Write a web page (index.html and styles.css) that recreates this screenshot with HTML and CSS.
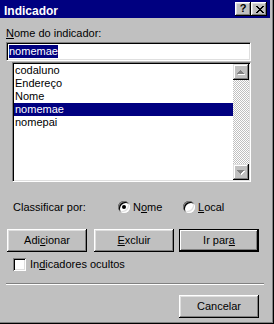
FILE: index.html
```html
<!DOCTYPE html>
<html lang="pt">
<head>
    <meta charset="UTF-8">
    <title>Indicador</title>
    <link rel="stylesheet" href="styles.css">
</head>
<body>
    <div class="dialog">
        <div class="titlebar">
            <span class="title">Indicador</span>
            <div class="caption-btns">
                <button class="cap-btn help">?</button>
                <button class="cap-btn close">
                    <svg width="8" height="7" viewBox="0 0 8 7" shape-rendering="crispEdges">
                        <path d="M0 0h2v1h1v1h2V1h1V0h2v1H7v1H6v1H5v1h1v1h1v1h1v1H6V6H5V5H3v1H2v1H0V6h1V5h1V4h1V3H2V2H1V1H0z" fill="#000"/>
                    </svg>
                </button>
            </div>
        </div>

        <div class="content">
            <div class="field-label"><u>N</u>ome do indicador:</div>
            <div class="textbox"><span class="selected-text">nomemae</span></div>

            <div class="listbox">
                <ul class="items">
                    <li>codaluno</li>
                    <li>Endereço</li>
                    <li>Nome</li>
                    <li class="active">nomemae</li>
                    <li>nomepai</li>
                </ul>
                <div class="vscroll">
                    <div class="scroll-btn">
                        <svg width="16" height="16" viewBox="0 0 16 16" shape-rendering="crispEdges">
                            <path d="M8 7h1v1h1v1h1v1h1v1H5V10h1V9h1V8h1z" fill="#fff"/>
                            <path d="M7 6h1v1h1v1h1v1h1v1H4V9h1V8h1V7h1z" fill="#808080"/>
                        </svg>
                    </div>
                    <div class="track"></div>
                    <div class="scroll-btn">
                        <svg width="16" height="16" viewBox="0 0 16 16" shape-rendering="crispEdges">
                            <path d="M5 7h7v1h-1v1h-1v1H9v1H8V10H7V9H6V8H5z" fill="#fff"/>
                            <path d="M4 6h7v1h-1v1H9v1H8v1H7V9H6V8H5V7H4z" fill="#808080"/>
                        </svg>
                    </div>
                </div>
            </div>

            <div class="sort-row">
                <span class="sort-label">Classificar por:</span>
                <label class="radio-opt">
                    <span class="radio checked"></span>
                    <span>N<u>o</u>me</span>
                </label>
                <label class="radio-opt">
                    <span class="radio"></span>
                    <span><u>L</u>ocal</span>
                </label>
            </div>

            <div class="btn-row">
                <button class="btn">Adi<u>c</u>ionar</button>
                <button class="btn excluir"><u>E</u>xcluir</button>
                <button class="btn default ir-para">Ir par<u>a</u></button>
            </div>

            <label class="check-row">
                <span class="checkbox"></span>
                <span>In<u>d</u>icadores ocultos</span>
            </label>

            <div class="separator"></div>

            <div class="footer">
                <button class="btn">Cancelar</button>
            </div>
        </div>
    </div>
</body>
</html>
```

FILE: styles.css
```css
:root {
    --face: #c0c0c0;
    --light: #dfdfdf;
    --shadow: #808080;
    --dark: #000000;
    --highlight: #000080;
}

* {
    box-sizing: border-box;
}

body {
    margin: 0;
    background: var(--face);
    font-family: 'Liberation Sans', Arial, sans-serif;
    font-size: 11px;
    line-height: 13px;
    color: #000;
}

u {
    text-decoration: underline;
    text-underline-offset: 1px;
}

.dialog {
    width: 274px;
    height: 324px;
    background: var(--face);
    border-right: 1px solid var(--dark);
    border-bottom: 1px solid var(--dark);
    box-shadow: inset -1px -1px 0 var(--shadow);
    padding-right: 3px;
}

/* title bar */
.titlebar {
    height: 18px;
    background: var(--highlight);
    display: flex;
    align-items: flex-start;
    justify-content: space-between;
    padding: 2px 3px 0 4px;
}

.title {
    color: #fff;
    font-weight: bold;
    font-size: 12px;
    line-height: 14px;
    margin-top: 2px;
}

.caption-btns {
    display: flex;
}

.cap-btn {
    width: 16px;
    height: 14px;
    padding: 0;
    border: none;
    background: var(--face);
    box-shadow: inset -1px -1px var(--dark), inset 1px 1px #fff, inset -2px -2px var(--shadow), inset 2px 2px var(--light);
    display: flex;
    align-items: center;
    justify-content: center;
    font-family: 'Liberation Sans', Arial, sans-serif;
    font-weight: bold;
    font-size: 11px;
    line-height: 11px;
    color: #000;
}

.cap-btn.help {
    padding-bottom: 1px;
}

.cap-btn.close svg {
    margin-left: 1px;
}

/* body */
.content {
    padding-left: 6px;
}

.field-label {
    margin-top: 9px;
}

.textbox {
    margin-top: 2px;
    width: 245px;
    height: 19px;
    background: #fff;
    border: 1px solid;
    border-color: var(--shadow) #fff #fff var(--shadow);
    box-shadow: inset 1px 1px var(--dark), inset -1px -1px var(--light);
    padding: 2px 0 0 2px;
}

.selected-text {
    display: inline-block;
    background: var(--highlight);
    color: #fff;
    height: 13px;
}

.listbox {
    margin: 1px 0 0 6px;
    width: 239px;
    height: 120px;
    background: #fff;
    border: 1px solid;
    border-color: var(--shadow) #fff #fff var(--shadow);
    box-shadow: inset 1px 1px var(--dark), inset -1px -1px var(--light);
    padding: 1px;
    display: flex;
}

.items {
    list-style: none;
    margin: 0;
    padding: 0;
    flex: 1;
}

.items li {
    height: 13px;
    padding-left: 1px;
}

.items li.active {
    background: var(--highlight);
    color: #fff;
}

.vscroll {
    width: 16px;
    display: flex;
    flex-direction: column;
}

.scroll-btn {
    width: 16px;
    height: 16px;
    background: var(--face);
    box-shadow: inset -1px -1px var(--dark), inset 1px 1px var(--light), inset -2px -2px var(--shadow), inset 2px 2px #fff;
}

.scroll-btn svg {
    display: block;
}

.track {
    flex: 1;
    background: repeating-conic-gradient(var(--face) 0 25%, #fff 0 50%) 0 0 / 2px 2px;
}

/* sort options */
.sort-row {
    margin: 19px 0 0 7px;
    display: flex;
    align-items: flex-start;
}

.sort-label {
    width: 105px;
}

.radio-opt {
    width: 65px;
    display: flex;
    align-items: flex-start;
    gap: 3px;
}

.radio {
    width: 12px;
    height: 12px;
    border-radius: 50%;
    background: #fff;
    box-shadow: inset 1px 1px var(--shadow), inset -1px -1px #fff, inset 2px 2px var(--dark), inset -2px -2px var(--light);
    position: relative;
}

.radio.checked::after {
    content: "";
    position: absolute;
    left: 4px;
    top: 4px;
    width: 4px;
    height: 4px;
    border-radius: 50%;
    background: #000;
}

/* buttons */
.btn {
    width: 80px;
    height: 23px;
    padding: 0;
    border: none;
    background: var(--face);
    box-shadow: inset -1px -1px var(--dark), inset 1px 1px #fff, inset -2px -2px var(--shadow), inset 2px 2px var(--light);
    font-family: 'Liberation Sans', Arial, sans-serif;
    font-size: 11px;
    line-height: 13px;
    color: #000;
}

.btn.default {
    box-shadow: inset 0 0 0 1px var(--dark), inset -2px -2px var(--dark), inset 2px 2px #fff, inset -3px -3px var(--shadow);
}

.btn-row {
    margin: 15px 0 0 1px;
    display: flex;
}

.btn.excluir {
    margin-left: 7px;
}

.btn.ir-para {
    margin-left: 5px;
}

/* checkbox */
.check-row {
    margin: 6px 0 0 7px;
    display: flex;
    align-items: center;
    gap: 4px;
}

.checkbox {
    width: 13px;
    height: 13px;
    background: #fff;
    box-shadow: inset 1px 1px var(--shadow), inset -1px -1px #fff, inset 2px 2px var(--dark), inset -2px -2px var(--light);
}

.separator {
    margin-top: 12px;
    width: 258px;
    height: 2px;
    border-top: 1px solid var(--shadow);
    border-bottom: 1px solid #fff;
}

.footer {
    margin: 10px 0 0 173px;
}
```
